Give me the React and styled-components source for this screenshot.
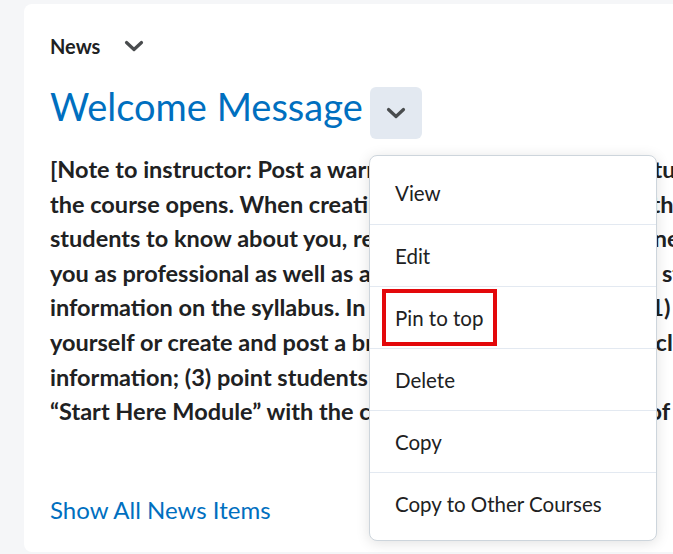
import React from 'react'
import styled, { createGlobalStyle } from 'styled-components'

const GlobalStyle = createGlobalStyle`
	html, body {
		margin: 0;
		padding: 0;
		background: #f5f6f8;
		overflow: hidden;
	}
	body {
		font-family: Lato, 'Noto Sans', sans-serif;
		color: #202122;
	}
`

const Page = styled.div`
	width: 673px;
	height: 554px;
	padding: 4px 0 0 24px;
	box-sizing: border-box;
	overflow: hidden;
`

const Card = styled.section`
	position: relative;
	width: 1000px;
	height: 548px;
	background: #fff;
	border-radius: 8px;
	padding: 31px 0 0 26px;
	box-sizing: border-box;
`

const WidgetHeader = styled.div`
	display: flex;
	align-items: center;
	gap: 24px;
	height: 22px;
	font-size: 20px;
	font-weight: 700;
`

const TitleRow = styled.div`
	display: flex;
	align-items: flex-start;
	gap: 7px;
	margin-top: 29px;
`

const Title = styled.h1`
	margin: 0;
	font-size: 38px;
	font-weight: 400;
	color: #006fbf;
	line-height: 40px;
`

const MenuButton = styled.div`
	width: 52px;
	height: 52px;
	margin-top: 1px;
	border-radius: 6px;
	background: #e3e9f1;
	display: flex;
	align-items: center;
	justify-content: center;
`

const Body = styled.p`
	margin: 13px 0 0;
	font-size: 23.5px;
	font-weight: 700;
	line-height: 34.6px;
	white-space: nowrap;
`

const ShowAll = styled.a`
	display: block;
	margin-top: 66px;
	font-size: 24px;
	color: #006fbf;
	text-decoration: none;
`

const Menu = styled.ul`
	position: absolute;
	left: 345px;
	top: 151px;
	width: 288px;
	margin: 0;
	padding: 6px 0;
	list-style: none;
	background: #fff;
	border: 1px solid #cdd5dc;
	border-radius: 8px;
	box-shadow: 0 2px 14px rgba(0, 0, 0, 0.12);
	box-sizing: border-box;
`

const Item = styled.li`
	height: 62px;
	display: flex;
	align-items: center;
	padding-left: 25px;
	font-size: 20.5px;
	color: #202122;
	border-top: ${(p) => (p.$first ? 'none' : '1px solid #e3e9f1')};
	box-sizing: border-box;
`

const Highlight = styled.span`
	display: inline-flex;
	align-items: center;
	height: 57px;
	margin-left: -13px;
	padding: 0 10px 0 9px;
	border: 4px solid #e3080b;
	box-sizing: border-box;
`

const Chevron = () => (
	<svg width="20" height="12" viewBox="0 0 20 12" fill="none">
		<path d="M2.5 2.5l7.5 7 7.5-7" stroke="#494c4e" strokeWidth="3.2" strokeLinecap="round" strokeLinejoin="round" />
	</svg>
)

const lines = [
	'[Note to instructor: Post a warm welcome message to all students before',
	'the course opens. When creating your welcome message, think about what',
	'students to know about you, remembering that your class needs to see',
	'you as professional as well as approachable. Do not repeat student',
	'information on the syllabus. In your message you should: (1) introduce',
	'yourself or create and post a brief video introduction (2) include your',
	'information; (3) point students to what to use so that they',
	'\u201cStart Here Module\u201d with the course orientations instead of',
]

const items = ['View', 'Edit', 'Pin to top', 'Delete', 'Copy', 'Copy to Other Courses']

const App = () => {
	return (
		<Page>
			<GlobalStyle />
			<Card>
				<WidgetHeader>
					<span>News</span>
					<Chevron />
				</WidgetHeader>
				<TitleRow>
					<Title>Welcome Message</Title>
					<MenuButton>
						<Chevron />
					</MenuButton>
				</TitleRow>
				<Body>
					{lines.map((l, i) => (
						<React.Fragment key={i}>
							{l}
							<br />
						</React.Fragment>
					))}
				</Body>
				<ShowAll href="#">Show All News Items</ShowAll>
				<Menu>
					{items.map((it, i) => (
						<Item key={it} $first={i === 0}>
							{it === 'Pin to top' ? <Highlight>{it}</Highlight> : it}
						</Item>
					))}
				</Menu>
			</Card>
		</Page>
	)
}

export default App
